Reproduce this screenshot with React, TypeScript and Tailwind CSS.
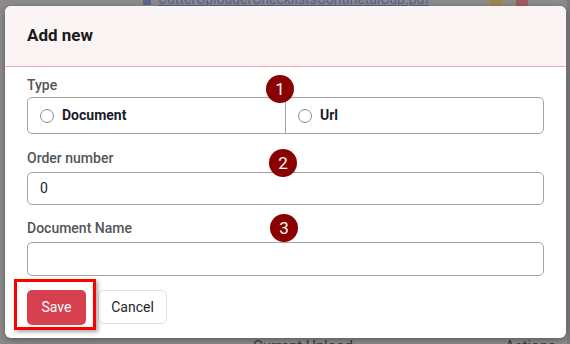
import React from "react";

const font = { fontFamily: "Roboto, 'Liberation Sans', Arial, sans-serif" };

function Badge({ n, className }: { n: string; className: string }) {
  return (
    <div
      className={`absolute w-[28px] h-[28px] rounded-full bg-[#8b0000] text-white text-[17px] leading-none flex items-center justify-center ${className}`}
    >
      {n}
    </div>
  );
}

function Radio({ label }: { label: string }) {
  return (
    <div className="flex items-center gap-[8px] pl-[12px]">
      <span className="w-[14px] h-[14px] rounded-full border border-[#8d8d8d] bg-white" />
      <span className="text-[14px] font-bold text-[#1c1c2c]">{label}</span>
    </div>
  );
}

export default function App() {
  return (
    <div
      className="relative w-[570px] h-[344px] overflow-hidden bg-[#8b8b8b]"
      style={font}
    >
      {/* page behind the overlay */}
      <div className="flex flex-col h-full">
        <div className="flex items-center h-[20px] -mt-[11px] pl-[143px] whitespace-nowrap">
          <span className="w-[8px] h-[12px] bg-[#5a6390] mr-[7px]" />
          <span className="text-[14px] text-[#56618f] underline">
            CutterUploaderChecklistsContinetalCup.pdf
          </span>
          <span className="ml-[60px] w-[14px] h-[14px] bg-[#a08254]" />
          <span className="ml-[13px] w-[12px] h-[14px] bg-[#a05a5f]" />
        </div>
        <div className="flex-1" />
        <div className="flex items-center h-[20px] -mb-[12px] pl-[253px] text-[15px] text-[#3c3c3c] whitespace-nowrap">
          <span>Current Upload</span>
          <span className="ml-[152px]">Actions</span>
        </div>
      </div>
      <div className="absolute right-0 top-0 w-[3px] h-full bg-[#7a7a7a]" />

      {/* modal */}
      <div className="absolute left-[5px] top-[6px] w-[561px] h-[332px] bg-white rounded-[6px] shadow-[0_2px_6px_rgba(0,0,0,0.35)]">
        <div className="h-[61px] px-[22px] flex items-center bg-[#fbf4f4] border-b border-[#f0a9ae] rounded-t-[6px]">
          <h2 className="text-[17px] font-bold text-[#1a1a1a]">Add new</h2>
        </div>
        <div className="px-[22px] flex flex-col">
          <label className="mt-[9px] text-[14px] leading-[18px] font-medium text-[#555]">
            Type
          </label>
          <div className="mt-[3px] h-[37px] flex border border-[#a3a3a3] rounded-[5px]">
            <div className="w-[258px] flex items-center border-r border-[#a3a3a3]">
              <Radio label="Document" />
            </div>
            <div className="flex-1 flex items-center">
              <Radio label="Url" />
            </div>
          </div>
          <label className="mt-[15px] text-[14px] leading-[18px] font-medium text-[#555]">
            Order number
          </label>
          <div className="mt-[5px] h-[33px] flex items-center px-[12px] border border-[#a3a3a3] rounded-[5px] text-[14px] text-[#1c1c2c]">
            0
          </div>
          <label className="mt-[14px] text-[14px] leading-[18px] font-medium text-[#555]">
            Document Name
          </label>
          <div className="mt-[5px] h-[34px] border border-[#a3a3a3] rounded-[5px]" />
          <div className="mt-[14px] flex items-start gap-[12px]">
            <button className="w-[59px] h-[35px] rounded-[5px] bg-[#d7404f] text-white text-[14px]">
              Save
            </button>
            <button className="w-[69px] h-[34px] rounded-[5px] border border-[#dee2e6] bg-white text-[14px] text-[#212529]">
              Cancel
            </button>
          </div>
        </div>

        <div className="absolute left-[9px] top-[273px] w-[82px] h-[51px] border-[3px] border-[#ff0000] shadow-[2px_2px_4px_rgba(0,0,0,0.35)]" />
        <Badge n="1" className="left-[261px] top-[69px]" />
        <Badge n="2" className="left-[264px] top-[143px]" />
        <Badge n="3" className="left-[265px] top-[208px]" />
      </div>
    </div>
  );
}
